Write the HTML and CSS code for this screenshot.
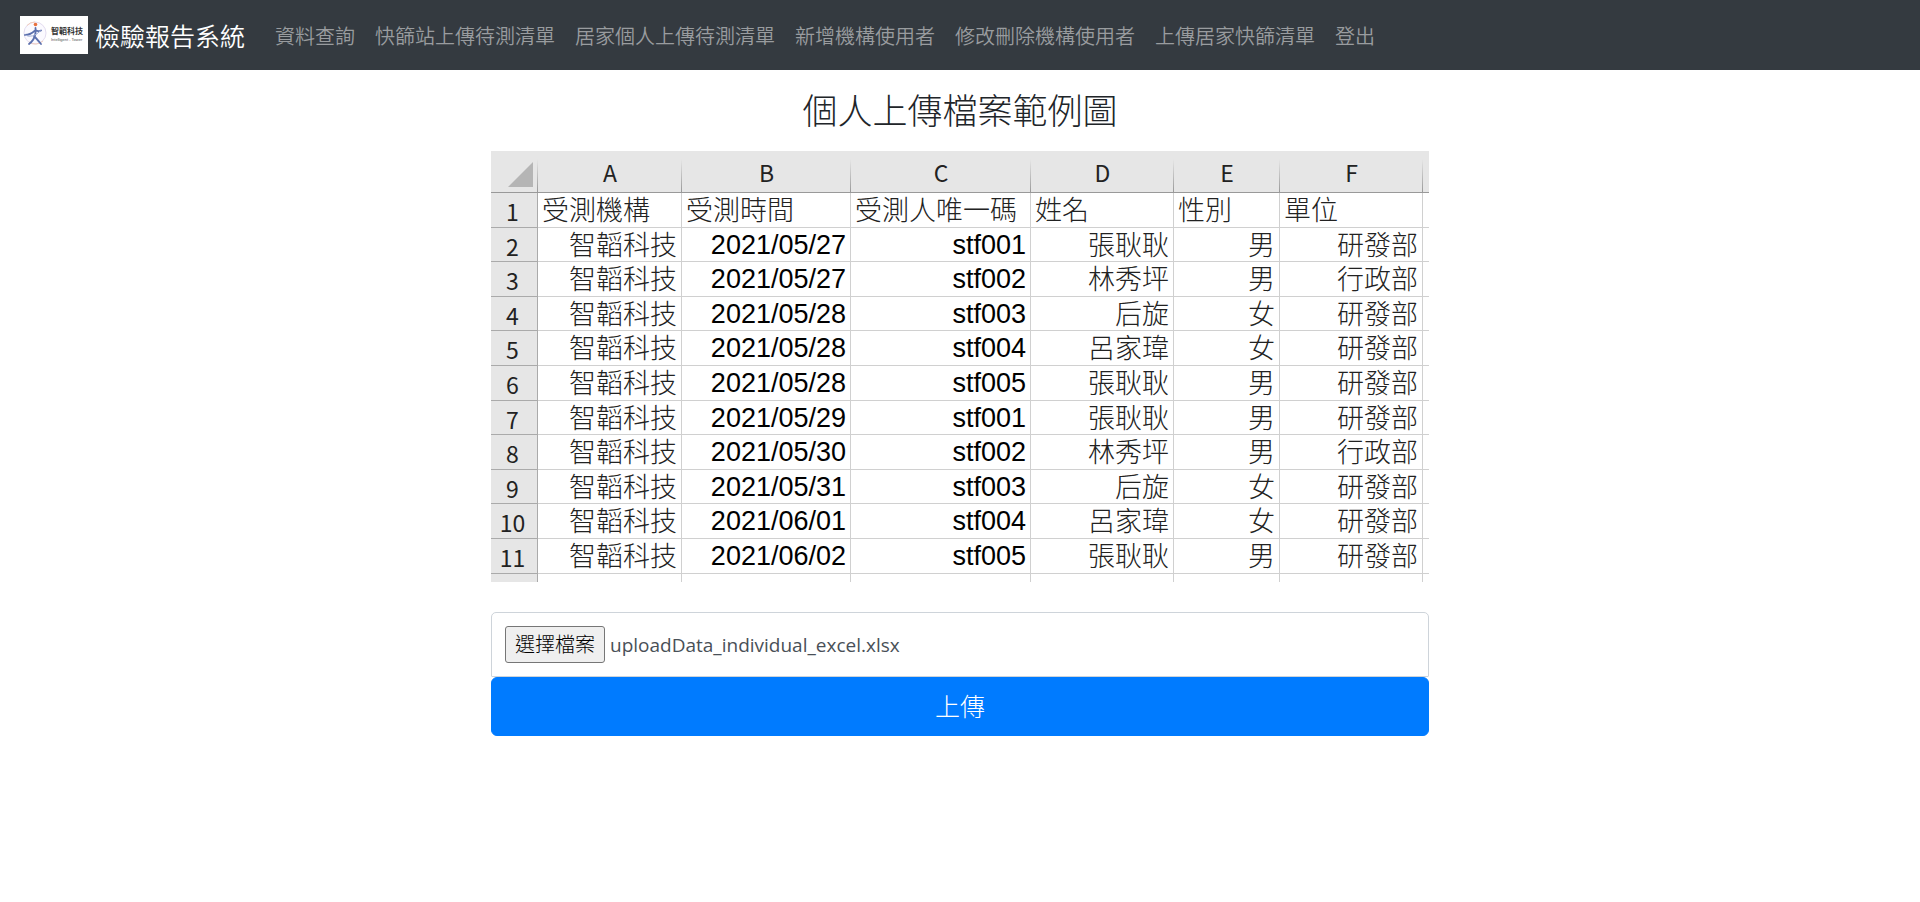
FILE: index.html
```html
<!DOCTYPE html>
<html lang="zh-Hant">
<head>
<meta charset="utf-8">
<meta name="viewport" content="width=device-width, initial-scale=1">
<title>檢驗報告系統</title>
<link rel="stylesheet" href="styles.css">
</head>
<body>
<nav class="navbar">
  <a class="brand" href="#">
    <svg class="brand-logo" viewBox="0 0 68 38" width="68" height="38" role="img" aria-label="智韜科技">
      <rect width="68" height="38" fill="#fff"/>
      <circle cx="15" cy="17" r="11" fill="#fbfaff" stroke="#e3dcf0" stroke-width="1"/>
      <path d="M7 9.500A11 11 0 0 1 15 6M23 25A11 11 0 0 1 9 26" fill="none" stroke="#f3cdbd" stroke-width="1"/>
      <circle cx="15.500" cy="8.500" r="1.800" fill="#e8713f"/>
      <path d="M15.500 12L15.500 18M5 19Q10 19 14.500 15M21 14.500Q18 16 15.500 14M15.500 17Q14.500 24 9 28M14 20Q16 22 21 28" fill="none" stroke="#5b70ae" stroke-width="1.800" stroke-linecap="round"/>
      <path d="M5 19Q12 23 21 14.500" fill="none" stroke="#a3b0d6" stroke-width="1"/>
      <text class="logo-name" x="31" y="18">智韜科技</text>
      <text class="logo-sub" x="31" y="25">Intelligent - Tower</text>
    </svg>
    <span>檢驗報告系統</span>
  </a>
  <ul class="nav-list">
    <li><a href="#">資料查詢</a></li>
    <li><a href="#">快篩站上傳待測清單</a></li>
    <li><a href="#">居家個人上傳待測清單</a></li>
    <li><a href="#">新增機構使用者</a></li>
    <li><a href="#">修改刪除機構使用者</a></li>
    <li><a href="#">上傳居家快篩清單</a></li>
    <li><a href="#">登出</a></li>
  </ul>
</nav>
<main class="content">
  <h1 class="title">個人上傳檔案範例圖</h1>
  <table class="sheet">
    <colgroup><col class="c-num"><col class="c-a"><col class="c-b"><col class="c-c"><col class="c-d"><col class="c-e"><col class="c-f"><col class="c-rest"></colgroup>
    <thead>
      <tr><th class="corner"><svg viewBox="0 0 25 25" width="25" height="25" aria-hidden="true"><path d="M25 0V25H0Z" fill="#b5b5b5"/></svg></th><th>A</th><th>B</th><th>C</th><th>D</th><th>E</th><th>F</th><th></th></tr>
    </thead>
    <tbody>
      <tr class="labels"><th>1</th><td>受測機構</td><td>受測時間</td><td>受測人唯一碼</td><td>姓名</td><td>性別</td><td>單位</td><td></td></tr>
      <tr><th>2</th><td>智韜科技</td><td class="num">2021/05/27</td><td class="num">stf001</td><td>張耿耿</td><td>男</td><td>研發部</td><td></td></tr>
      <tr><th>3</th><td>智韜科技</td><td class="num">2021/05/27</td><td class="num">stf002</td><td>林秀坪</td><td>男</td><td>行政部</td><td></td></tr>
      <tr><th>4</th><td>智韜科技</td><td class="num">2021/05/28</td><td class="num">stf003</td><td>后旋</td><td>女</td><td>研發部</td><td></td></tr>
      <tr><th>5</th><td>智韜科技</td><td class="num">2021/05/28</td><td class="num">stf004</td><td>呂家瑋</td><td>女</td><td>研發部</td><td></td></tr>
      <tr><th>6</th><td>智韜科技</td><td class="num">2021/05/28</td><td class="num">stf005</td><td>張耿耿</td><td>男</td><td>研發部</td><td></td></tr>
      <tr><th>7</th><td>智韜科技</td><td class="num">2021/05/29</td><td class="num">stf001</td><td>張耿耿</td><td>男</td><td>研發部</td><td></td></tr>
      <tr><th>8</th><td>智韜科技</td><td class="num">2021/05/30</td><td class="num">stf002</td><td>林秀坪</td><td>男</td><td>行政部</td><td></td></tr>
      <tr><th>9</th><td>智韜科技</td><td class="num">2021/05/31</td><td class="num">stf003</td><td>后旋</td><td>女</td><td>研發部</td><td></td></tr>
      <tr><th>10</th><td>智韜科技</td><td class="num">2021/06/01</td><td class="num">stf004</td><td>呂家瑋</td><td>女</td><td>研發部</td><td></td></tr>
      <tr><th>11</th><td>智韜科技</td><td class="num">2021/06/02</td><td class="num">stf005</td><td>張耿耿</td><td>男</td><td>研發部</td><td></td></tr>
      <tr class="stub"><th></th><td></td><td></td><td></td><td></td><td></td><td></td><td></td></tr>
    </tbody>
  </table>
  <form class="upload">
    <div class="file-field">
      <label class="file-button" for="file">選擇檔案</label>
      <span class="file-name">uploadData_individual_excel.xlsx</span>
      <input class="file-input" type="file" id="file" accept=".xlsx">
    </div>
    <button class="submit" type="button">上傳</button>
  </form>
</main>
</body>
</html>
```
FILE: styles.css
```css
* { box-sizing: border-box; }

body {
  margin: 0;
  background: #fff;
  color: #212529;
  font: 300 20px/30px "Open Sans", "Noto Sans CJK TC", sans-serif;
}

.navbar {
  display: flex;
  align-items: center;
  min-height: 70px;
  padding: 10px 20px;
  background: #343a40;
}

.brand {
  display: flex;
  align-items: center;
  gap: 7px;
  margin-right: 20px;
  color: #fff;
  font-family: "Noto Sans CJK TC", sans-serif;
  font-size: 25px;
  font-weight: 350;
  line-height: 38px;
  text-decoration: none;
  white-space: nowrap;
}

.brand-logo { flex: none; }
.logo-name { font: 700 8px "Noto Sans CJK TC", sans-serif; fill: #333; }
.logo-sub { font: 400 4px "Liberation Sans", sans-serif; fill: #555; }

.nav-list {
  display: flex;
  flex-wrap: wrap;
  margin: 0;
  padding: 2px 0 0;
  list-style: none;
  font-family: "Noto Sans CJK TC", sans-serif;
  font-weight: 350;
}

.nav-list a {
  display: block;
  padding: 0 10px;
  color: #999c9f;
  text-decoration: none;
  white-space: nowrap;
}

.content {
  max-width: 978px;
  margin: 0 auto;
  padding: 20px;
}

.title {
  margin: 0 0 19px;
  font-size: 35px;
  font-weight: 300;
  line-height: 42px;
  text-align: center;
}

.sheet {
  width: 100%;
  border-collapse: separate;
  border-spacing: 0;
  table-layout: fixed;
  line-height: 32px;
}

.c-num { width: 47px; }
.c-a { width: 144px; }
.c-b { width: 169px; }
.c-c { width: 180px; }
.c-d { width: 143px; }
.c-e { width: 106px; }
.c-f { width: 143px; }

.sheet th,
.sheet td {
  height: 35px;
  padding: 0;
  border-right: 1px solid #d0d0d0;
  border-bottom: 1px solid #d0d0d0;
  white-space: nowrap;
}

.sheet td {
  padding: 0 4px;
  color: #222;
  font-size: 27px;
  text-align: right;
}

.sheet tr > :last-child { border-right: 0; padding: 0; }

.sheet th {
  background: #e6e6e6;
  color: #222;
  font-family: "Noto Sans CJK TC", sans-serif;
  font-size: 23px;
  font-weight: 400;
  text-align: center;
}

.sheet thead th {
  height: 42px;
  border-right: 0;
  border-bottom-color: #999;
  background: linear-gradient(#e6e6e6 20%, #999) right / 1px 100% no-repeat #e6e6e6;
}

.sheet thead th:last-child { background: #e6e6e6; }

.sheet thead .corner {
  padding: 5px 5px 0 0;
  text-align: right;
  line-height: 0;
}

.sheet tbody th { padding: 2px 3px 0 0; border-color: #aaa; line-height: 30px; }
.sheet tbody tr:nth-child(5n + 2) > *,
.sheet tbody tr:nth-child(5n + 4) > * { height: 34px; }
.sheet .labels td { text-align: left; }
.sheet .num { color: #000; font-family: "Liberation Sans", sans-serif; font-weight: 400; }

.sheet tbody tr.stub:last-child > * { height: 8px; padding: 0; border-bottom: 0; line-height: 0; }

.upload { margin-top: 30px; }

.file-field {
  position: relative;
  display: flex;
  align-items: flex-start;
  gap: 5px;
  height: 65px;
  padding: 13px;
  border: 1px solid #ced4da;
  border-radius: 5px 5px 1px 1px;
  color: #495057;
}

.file-button {
  padding: 0 9px;
  border: 1px solid #767676;
  border-radius: 3px;
  background: #efefef;
  color: #000;
  line-height: 35px;
}

.file-name { font-size: 19px; font-weight: 400; line-height: 39px; }

.file-input {
  position: absolute;
  inset: 0;
  width: 100%;
  opacity: 0;
}

.submit {
  display: block;
  width: 100%;
  padding: 10px 20px;
  border: 1px solid #007bff;
  border-radius: 6px;
  background: #007bff;
  color: #fff;
  font: inherit;
  font-size: 25px;
  line-height: 37px;
}
```
